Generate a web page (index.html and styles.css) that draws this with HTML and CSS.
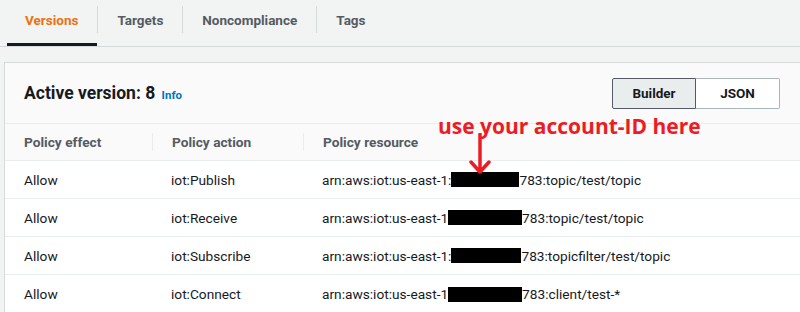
FILE: index.html
```html
<!DOCTYPE html>
<html lang="en">
<head>
  <meta charset="UTF-8" />
  <title>Policy versions</title>
  <link rel="stylesheet" href="styles.css">
</head>
<body>
  <nav class="tabs">
    <a class="tab active">Versions</a>
    <span class="tab-sep"></span>
    <a class="tab">Targets</a>
    <span class="tab-sep"></span>
    <a class="tab">Noncompliance</a>
    <span class="tab-sep"></span>
    <a class="tab">Tags</a>
  </nav>

  <section class="card">
    <div class="card-header">
      <h2>Active version: 8 <a class="info">Info</a></h2>
      <div class="segmented">
        <button class="seg selected">Builder</button>
        <button class="seg">JSON</button>
      </div>
    </div>

    <div class="table">
      <div class="row head">
        <div class="cell">Policy effect</div>
        <div class="cell"><span class="col-sep"></span>Policy action</div>
        <div class="cell"><span class="col-sep"></span>Policy resource</div>
      </div>
      <div class="row">
        <div class="cell">Allow</div>
        <div class="cell">iot:Publish</div>
        <div class="cell">arn:aws:iot:us-east-1:<span class="redact r1"></span>783:topic/test/topic</div>
      </div>
      <div class="row">
        <div class="cell">Allow</div>
        <div class="cell">iot:Receive</div>
        <div class="cell">arn:aws:iot:us-east-1<span class="redact r2"></span>783:topic/test/topic</div>
      </div>
      <div class="row">
        <div class="cell">Allow</div>
        <div class="cell">iot:Subscribe</div>
        <div class="cell">arn:aws:iot:us-east-1:<span class="redact r3"></span>783:topicfilter/test/topic</div>
      </div>
      <div class="row">
        <div class="cell">Allow</div>
        <div class="cell">iot:Connect</div>
        <div class="cell">arn:aws:iot:us-east-1<span class="redact r4"></span>783:client/test-*</div>
      </div>
    </div>

    <!-- annotation drawn over the screenshot -->
    <div class="note">use your account-ID here</div>
    <svg class="note-arrow" width="24" height="42" viewBox="0 0 24 42">
      <path d="M12 1 V38 M3 29 L12 39 L21 29" fill="none" stroke="#ed1c24" stroke-width="3.5" stroke-linecap="round" stroke-linejoin="round"/>
    </svg>
  </section>
</body>
</html>
```

FILE: styles.css
```css
* {
  box-sizing: border-box;
}

html, body {
  margin: 0;
  padding: 0;
  overflow: hidden;
}

body {
  background: #f2f3f3;
  font-family: Roboto, "Liberation Sans", sans-serif;
  color: #16191f;
  font-size: 13.7px;
}

.tabs {
  display: flex;
  align-items: center;
  height: 47px;
  padding-left: 7px;
  border-bottom: 1px solid #d5dbdb;
}

.tab {
  height: 46px;
  display: flex;
  align-items: center;
  padding: 4px 19px 8px;
  font-weight: bold;
  font-size: 13.5px;
  color: #545b64;
  border-bottom: 3px solid transparent;
}

.tab.active {
  color: #ec7211;
  border-bottom-color: #16191f;
  padding-left: 18px;
}

.tab-sep {
  width: 1px;
  height: 27px;
  background: #d5dbdb;
  margin-top: -8px;
}

.card {
  position: relative;
  margin: 15px -20px 0 4px;
  background: #fff;
  border: 1px solid #d5dbdb;
  border-right: none;
}

.card-header {
  height: 61px;
  display: flex;
  align-items: center;
  justify-content: space-between;
  padding: 0 40px 0 19px;
  background: #fafafa;
  border-bottom: 1px solid #eaeded;
}

.card-header h2 {
  margin: 0;
  font-size: 17.5px;
  font-weight: bold;
  color: #16191f;
}

.info {
  font-size: 11.5px;
  color: #0073bb;
  margin-left: 2px;
}

.segmented {
  display: flex;
}

.seg {
  height: 31px;
  width: 84px;
  font-family: inherit;
  font-weight: bold;
  font-size: 13.5px;
  color: #16191f;
  background: #fff;
  border: 1px solid #aab7b8;
  border-left: none;
  border-radius: 0 2px 2px 0;
}

.seg.selected {
  background: #eaeded;
  border: 1px solid #545b64;
  border-radius: 2px 0 0 2px;
  color: #16191f;
}

.row {
  display: grid;
  grid-template-columns: 147px 151px 1fr;
  height: 38px;
  border-bottom: 1px solid #eaeded;
}

.row:last-child {
  border-bottom: none;
}

.row.head {
  background: #fafafa;
  height: 37px;
  font-weight: bold;
  color: #545b64;
}

.cell {
  display: flex;
  align-items: center;
  padding-left: 19px;
  white-space: nowrap;
}

.row.head .cell + .cell {
  padding-left: 0;
}

.col-sep {
  width: 1px;
  height: 18px;
  background: #eaeded;
  margin-right: 19px;
}

.redact {
  display: inline-block;
  height: 15px;
  background: #000;
}

.r1 { width: 68px; }
.r2 { width: 74px; }
.r3 { width: 70px; }
.r4 { width: 74px; }

.note {
  position: absolute;
  left: 433px;
  top: 49px;
  font-family: "Open Sans", sans-serif;
  font-weight: bold;
  font-size: 21px;
  color: #ed1c24;
}

.note-arrow {
  position: absolute;
  left: 463px;
  top: 70px;
}
```
